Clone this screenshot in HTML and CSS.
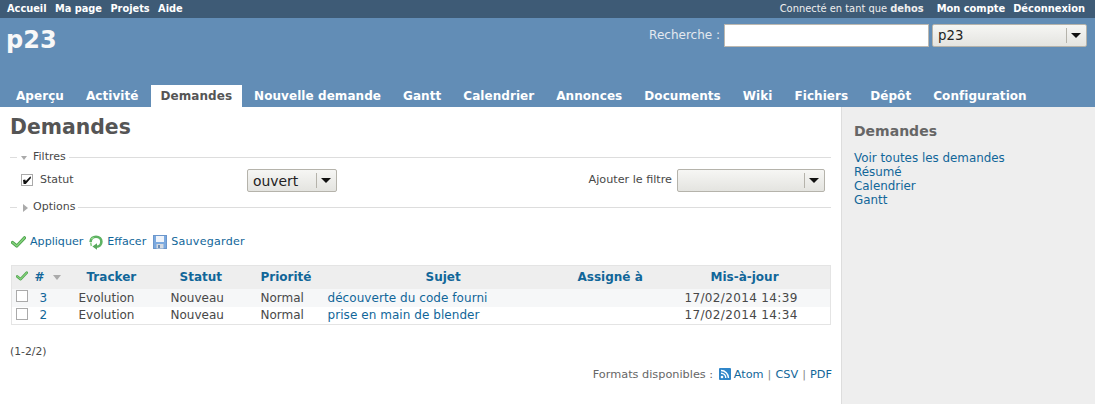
FILE: index.html
```html
<!DOCTYPE html>
<html lang="fr">
<head>
<meta charset="utf-8">
<title>Demandes - p23</title>
<link rel="stylesheet" href="styles.css">
</head>
<body>
<div class="top-menu">
  <nav class="top-left"><a>Accueil</a><a>Ma page</a><a>Projets</a><a>Aide</a></nav>
  <div class="top-right"><span class="loggedas">Connecté en tant que <b>dehos</b></span><a>Mon compte</a><a>Déconnexion</a></div>
</div>
<header class="header">
  <div class="head-row">
    <h1 class="project">p23</h1>
    <div class="search">
      <span class="search-label">Recherche :</span>
      <span class="search-input"></span>
      <span class="select select-project"><span class="select-value">p23</span><span class="select-btn"><i class="caret"></i></span></span>
    </div>
  </div>
  <nav class="tabs">
    <a>Aperçu</a><a>Activité</a><a class="active">Demandes</a><a>Nouvelle demande</a><a>Gantt</a><a>Calendrier</a><a>Annonces</a><a>Documents</a><a>Wiki</a><a>Fichiers</a><a>Dépôt</a><a>Configuration</a>
  </nav>
</header>
<div class="main">
  <main class="content">
    <h2 class="page-title">Demandes</h2>
    <div class="legend-row legend-filters"><i class="dash"></i><i class="tri-down"></i><span>Filtres</span><i class="line"></i></div>
    <div class="filter-row">
      <span class="check checked"><svg width="10" height="10" viewBox="0 0 10 10"><path d="M1 5 3.2 4.6 3.8 6 8.5 1.2 9 3 3.8 9 1.6 9Z" fill="#111"/></svg></span>
      <span class="filter-name">Statut</span>
      <span class="select select-op"><span class="select-value">ouvert</span><span class="select-btn"><i class="caret"></i></span></span>
      <span class="add-filter">Ajouter le filtre</span>
      <span class="select select-add"><span class="select-value"></span><span class="select-btn"><i class="caret"></i></span></span>
    </div>
    <div class="legend-row legend-options"><i class="dash"></i><i class="tri-right"></i><span>Options</span><i class="line"></i></div>
    <div class="actions">
      <a class="action"><svg width="15" height="12" viewBox="0 0 15 12"><path d="M1.5 6.5 5.8 10 13.5 1.8" fill="none" stroke="#4ea24e" stroke-width="3.2" stroke-linejoin="round" stroke-linecap="round"/><path d="M1.5 6.5 5.8 10 13.5 1.8" fill="none" stroke="#86d47c" stroke-width="1.4" stroke-linejoin="round" stroke-linecap="round"/></svg>Appliquer</a>
      <a class="action"><svg width="14" height="15" viewBox="0 0 14 15"><path d="M1.6 7C1.6 3.5 4 1.8 7 1.8 10.5 1.8 12.4 4 12.4 6.7 12.4 9.6 10.2 11.6 7.5 11.8" fill="none" stroke="#5eb262" stroke-width="2.6"/><path d="M2.2 4 4.8 2.4" stroke="#9ade94" stroke-width="1.2"/><path d="M8 8.2 8 14.8 3.4 11.5Z" fill="#58a85c"/><path d="M1.6 7.5 2.4 11" fill="none" stroke="#8bcf86" stroke-width="1.6"/></svg>Effacer</a>
      <a class="action action-save"><svg width="14" height="14" viewBox="0 0 14 14"><rect x=".5" y=".5" width="13" height="13" fill="#7ba9df" stroke="#6b96cb"/><rect x="3" y="1" width="8" height="6" fill="#f0f4fa"/><rect x="3.5" y="9" width="7" height="4.5" fill="#d4dae2"/><rect x="5" y="10" width="2" height="3" fill="#6d8db5"/></svg>Sauvegarder</a>
    </div>
    <table class="issues">
      <colgroup><col class="c-check"><col class="c-id"><col class="c-tracker"><col class="c-status"><col class="c-prio"><col class="c-subject"><col class="c-assign"><col class="c-date"></colgroup>
      <thead>
        <tr>
          <th class="h-check"><svg width="12" height="10" viewBox="0 0 15 12"><path d="M1.5 6.5 5.8 10 13.5 1.8" fill="none" stroke="#4ea24e" stroke-width="3.2" stroke-linejoin="round" stroke-linecap="round"/><path d="M1.5 6.5 5.8 10 13.5 1.8" fill="none" stroke="#86d47c" stroke-width="1.4" stroke-linejoin="round" stroke-linecap="round"/></svg></th>
          <th class="h-id"><a>#</a><i class="sort"></i></th>
          <th class="h-tracker"><a>Tracker</a></th>
          <th class="h-status"><a>Statut</a></th>
          <th><a>Priorité</a></th>
          <th class="h-subject"><a>Sujet</a></th>
          <th><a>Assigné à</a></th>
          <th class="h-date"><a>Mis-à-jour</a></th>
        </tr>
      </thead>
      <tbody>
        <tr class="odd">
          <td class="d-check"><span class="check"></span></td><td class="d-id"><a>3</a></td><td>Evolution</td><td>Nouveau</td><td>Normal</td><td class="d-subject"><a>découverte du code fourni</a></td><td></td><td class="d-date">17/02/2014 14:39</td>
        </tr>
        <tr>
          <td class="d-check"><span class="check"></span></td><td class="d-id"><a>2</a></td><td>Evolution</td><td>Nouveau</td><td>Normal</td><td class="d-subject"><a>prise en main de blender</a></td><td></td><td class="d-date">17/02/2014 14:34</td>
        </tr>
      </tbody>
    </table>
    <p class="pagination">(1-2/2)</p>
    <p class="other-formats">Formats disponibles : <svg class="feed" width="12" height="12" viewBox="0 0 12 12"><rect width="12" height="12" rx="1" fill="#2f86c9"/><circle cx="3" cy="9" r="1.3" fill="#fff"/><path d="M2 5.2A4.8 4.8 0 0 1 6.8 10M2 2.5A7.5 7.5 0 0 1 9.5 10" fill="none" stroke="#fff" stroke-width="1.4"/></svg><a>Atom</a> <span class="sep">|</span> <a>CSV</a> <span class="sep">|</span> <a>PDF</a></p>
  </main>
  <aside class="sidebar">
    <h3 class="side-title">Demandes</h3>
    <a>Voir toutes les demandes</a>
    <a>Résumé</a>
    <a>Calendrier</a>
    <a>Gantt</a>
  </aside>
</div>
</body>
</html>
```

FILE: styles.css
```css
* { box-sizing: border-box; }
html, body { margin: 0; height: 100%; }
body {
  font-family: "DejaVu Sans", sans-serif;
  font-size: 12px;
  line-height: 14px;
  color: #484848;
  background: #fff;
  overflow: hidden;
}
a { color: #169; text-decoration: none; }

.top-menu {
  height: 18px;
  background: #3e5b76;
  color: #fff;
  font-size: 9.8px;
  line-height: 17px;
  padding: 0 10px 0 7px;
  display: flex;
  justify-content: space-between;
}
.top-menu a { color: #fff; font-weight: bold; }
.top-left { display: flex; gap: 8.4px; }
.top-right { display: flex; gap: 8px; font-size: 9.9px; }
.loggedas { margin-right: 5px; color: #eee; }

.header {
  height: 89px;
  background: #628db6;
  display: flex;
  flex-direction: column;
  color: #f8f8f8;
}
.head-row {
  height: 67px;
  display: flex;
  justify-content: space-between;
  padding: 6px 8px 0 6px;
}
.project { margin: 1px 0 0; font-size: 24px; line-height: 30px; color: #f8f8f8; font-family: "DejaVu Sans", sans-serif; }
.search { display: flex; align-items: flex-start; height: 23px; }
.search-label { margin-right: 4px; line-height: 22px; color: #e4e9ef; }
.search-input {
  width: 205px; height: 23px;
  background: #fff;
  border: 1px solid #bcb8b0;
  margin-right: 3px;
}
.select {
  display: flex;
  height: 23px;
  border: 1px solid #b5b3ab;
  border-radius: 2px;
  background: linear-gradient(#f6f6f4, #e4e4e0);
  font-size: 13.3px;
  color: #222;
}
.select-value { flex: 1; padding-left: 5px; line-height: 22px; }
.select-btn { width: 20px; position: relative; display: flex; align-items: center; justify-content: center; }
.select-btn::before { content: ""; position: absolute; left: 0; top: 3px; bottom: 3px; width: 1px; background: #b5b3ab; }
.caret { width: 0; height: 0; border: 5px solid transparent; border-top: 5px solid #111; border-bottom: 0; }
.select-project { width: 155px; }

.tabs { display: flex; padding-left: 6px; height: 22px; font-weight: bold; font-size: 12px; line-height: 22px; }
.tabs a { color: #fff; padding: 0 10px; margin-right: 2px; letter-spacing: .06px; }
.tabs a.active { background: #fff; color: #555; }

.main { display: flex; height: 297px; }
.content { width: 841px; padding: 8px 10px 0 10px; background: #fff; flex: none; }
.page-title { margin: 0; font-size: 20.4px; line-height: 24px; color: #555; font-family: "DejaVu Sans", sans-serif; }

.legend-row { display: flex; align-items: center; height: 14px; font-size: 11px; color: #484848; }
.legend-filters { margin-top: 11px; }
.legend-options { margin-top: 8px; }
.dash { width: 7px; height: 1px; background: #ddd; margin-right: 4px; }
.line { flex: 1; height: 1px; background: #ddd; margin-left: 3px; }
.tri-down { width: 0; height: 0; border: 3.5px solid transparent; border-top: 4px solid #aaa; border-bottom: 0; margin-right: 6px; margin-top: 2px; }
.tri-right { width: 0; height: 0; border: 4px solid transparent; border-left: 5px solid #aaa; border-right: 0; margin: 2px 5px 0 2px; }

.filter-row { display: flex; align-items: center; height: 24px; margin-top: 4px; font-size: 11px; }
.check {
  width: 12px; height: 12px;
  border: 1px solid #aaa;
  background: #fff;
  display: inline-flex;
  align-items: center;
  justify-content: center;
  flex: none;
}
.filter-row .check { margin-left: 11px; }
.filter-name { margin-left: 7px; width: 207px; }
.select-op { width: 90px; height: 23px; font-size: 13.9px; }
.add-filter { margin-left: auto; margin-right: 5px; font-size: 11.2px; }
.select-add { width: 148px; margin-right: 6px; }

.actions { display: flex; gap: 6px; margin-top: 19px; height: 18px; align-items: center; font-size: 11.1px; }
.action { display: flex; align-items: center; gap: 4px; }
.actions .action:first-child { margin-left: 1px; }
.action-save { letter-spacing: .25px; margin-left: 1px; }

.issues {
  width: 819px;
  margin: 14px 0 0 1px;
  table-layout: fixed;
  border-collapse: collapse;
  border: 1px solid #e4e4e4;
  font-size: 12px;
}
.c-check { width: 18px; }
.c-id { width: 49px; }
.c-tracker { width: 92px; }
.c-status { width: 90px; }
.c-prio { width: 67px; }
.c-subject { width: 250px; }
.c-assign { width: 107px; }
.c-date { width: 146px; }
.issues th { height: 23px; padding: 0; background: #eee; text-align: left; font-weight: bold; }
.issues td { height: 18px; padding: 0; white-space: nowrap; }
.issues tbody tr { background: #fff; }
.issues tbody tr.odd { background: #f6f7f8; }
.h-check { padding-left: 4px !important; }
.h-id { padding-left: 5px !important; }
.h-tracker { padding-left: 8px !important; }
.h-status { padding-left: 9px !important; }
.h-subject { padding-left: 98px !important; }
.h-date { padding-left: 26px !important; }
.sort { display: inline-block; width: 0; height: 0; border: 4.5px solid transparent; border-top: 5px solid #aaa; border-bottom: 0; margin-left: 8px; vertical-align: 1px; }
.d-check { padding-left: 4px !important; }
.d-id { padding-left: 10px !important; }
.d-subject { letter-spacing: .06px; }
.d-date { letter-spacing: .35px; }

.pagination { margin: 20px 0 0; font-size: 10.8px; line-height: 14px; }
.other-formats { margin: 9px -1px 0 0; text-align: right; font-size: 11.3px; line-height: 14px; color: #666; }
.feed { margin: 0 3px 0 2px; vertical-align: -2px; }
.sep { color: #888; margin: 0 .4px; }

.sidebar {
  flex: 1;
  background: #eee;
  border-left: 1px solid #ddd;
  padding: 16px 10px 0 12px;
  display: flex;
  flex-direction: column;
  font-size: 11.9px;
}
.side-title { margin: 0 0 12px; font-size: 14px; line-height: 16px; color: #666; font-family: "DejaVu Sans", sans-serif; }
```
